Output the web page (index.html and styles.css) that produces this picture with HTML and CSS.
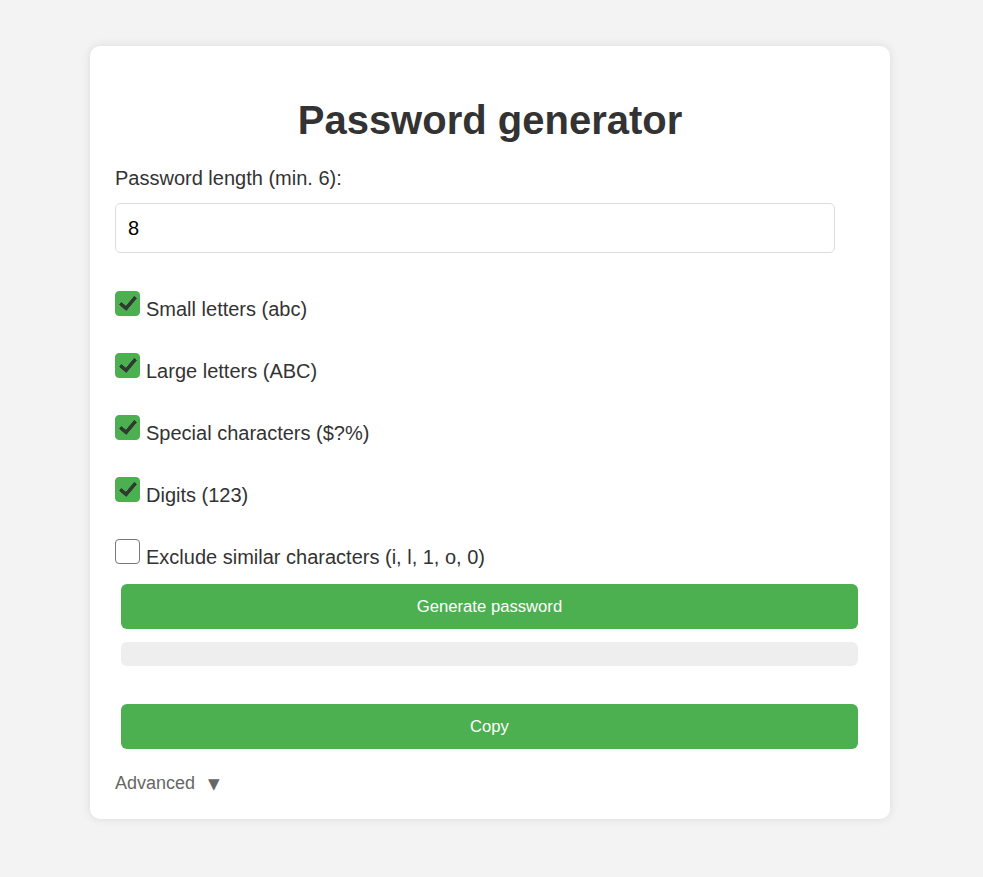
FILE: index.html
```html
<!DOCTYPE html>
<html>
<head>
<meta charset="utf-8">
<title>Password generator</title>
<link rel="stylesheet" href="styles.css">
</head>
<body>
<main class="card">
  <h1 class="title">Password generator</h1>
  <label class="field-label" for="len">Password length (min. 6):</label>
  <input class="len-input" id="len" type="number" value="8">
  <div class="options">
    <label class="opt"><input type="checkbox" class="box" checked><span class="opt-text">Small letters (abc)</span></label>
    <label class="opt"><input type="checkbox" class="box" checked><span class="opt-text">Large letters (ABC)</span></label>
    <label class="opt"><input type="checkbox" class="box" checked><span class="opt-text">Special characters ($?%)</span></label>
    <label class="opt"><input type="checkbox" class="box" checked><span class="opt-text">Digits (123)</span></label>
    <label class="opt"><input type="checkbox" class="box"><span class="opt-text">Exclude similar characters (i, l, 1, o, 0)</span></label>
  </div>
  <div class="actions">
    <button class="btn btn-generate">Generate password</button>
    <div class="output"></div>
    <button class="btn btn-copy">Copy</button>
  </div>
  <div class="advanced">Advanced <span class="arrow">▼</span></div>
</main>
</body>
</html>
```
FILE: styles.css
```css
html, body {
  margin: 0;
  padding: 0;
}
body {
  background: #f3f3f3;
  font-family: "Liberation Sans", Arial, sans-serif;
  color: #333;
  padding: 46px 3px 58px 0;
}
.card {
  width: 800px;
  box-sizing: border-box;
  margin: 0 auto;
  background: #fff;
  border-radius: 10px;
  box-shadow: 0 0 10px rgba(0, 0, 0, 0.1);
  padding: 25px 25px 24px;
}
.title {
  font-size: 40px;
  font-weight: bold;
  text-align: center;
  margin: 26px 0 24px;
  line-height: 46px;
  color: #333;
}
.field-label {
  display: block;
  font-size: 20px;
  line-height: 23px;
  margin-bottom: 13px;
  color: #333;
}
.len-input {
  display: block;
  width: 720px;
  height: 50px;
  box-sizing: border-box;
  padding: 12px 12px;
  border: 1px solid #ddd;
  border-radius: 5px;
  font-family: "Liberation Sans", Arial, sans-serif;
  font-size: 20px;
  color: #000;
  margin: 0;
  -moz-appearance: textfield;
}
.len-input::-webkit-outer-spin-button,
.len-input::-webkit-inner-spin-button {
  -webkit-appearance: none;
  margin: 0;
}
.options {
  display: flex;
  flex-direction: column;
  gap: 32px;
  margin-top: 38px;
}
.opt {
  display: flex;
  align-items: flex-start;
  gap: 6px;
  font-size: 20px;
  line-height: 23px;
  color: #333;
}
.opt-text {
  padding-top: 7px;
}
.box {
  appearance: none;
  -webkit-appearance: none;
  width: 25px;
  height: 25px;
  margin: 0;
  border: 1px solid #777;
  border-radius: 4px;
  background: #fff;
  box-sizing: border-box;
  position: relative;
  flex: none;
}
.box:checked {
  background: #4caf50;
  border-color: #4caf50;
}
.box:checked::after {
  content: "";
  position: absolute;
  left: 7px;
  top: 1px;
  width: 6px;
  height: 13px;
  border-right: 4px solid #2f3a30;
  border-bottom: 4px solid #2f3a30;
  border-radius: 1px;
  transform: rotate(40deg);
}
.actions {
  display: flex;
  flex-direction: column;
  padding: 0 7px 0 6px;
  margin-top: 15px;
}
.btn {
  display: block;
  width: 100%;
  height: 45px;
  border: none;
  border-radius: 6px;
  background: #4caf50;
  color: #fff;
  font-family: "Liberation Sans", Arial, sans-serif;
  font-size: 16.67px;
  cursor: pointer;
}
.output {
  height: 24px;
  margin-top: 13px;
  background: #eee;
  border-radius: 6px;
}
.btn-copy {
  margin-top: 38px;
}
.advanced {
  margin-top: 24px;
  font-size: 18px;
  line-height: 21px;
  color: #666;
}
.arrow {
  margin-left: 8px;
  font-family: "DejaVu Sans", sans-serif;
  font-size: 15px;
}
```
